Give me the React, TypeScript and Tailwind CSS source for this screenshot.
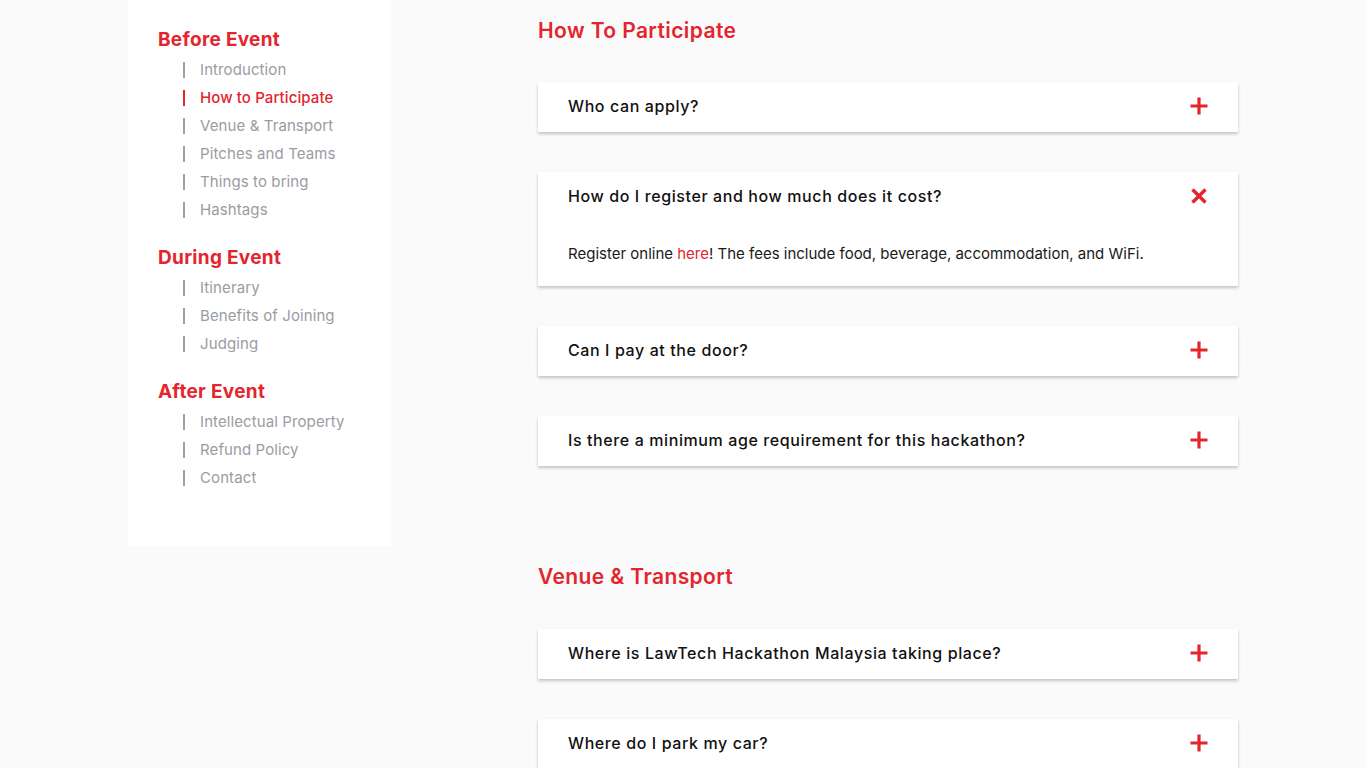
import React from "react";

const RED = "text-[#e3252d]";

function Plus() {
  return (
    <svg width="20" height="20" viewBox="0 0 20 20" className="shrink-0">
      <path d="M10 1.5v17M1.5 10h17" stroke="#e3252d" strokeWidth="3.2" />
    </svg>
  );
}

function Cross() {
  return (
    <svg width="20" height="20" viewBox="0 0 20 20" className="shrink-0">
      <path d="M3.5 3.5l13 13M16.5 3.5l-13 13" stroke="#e3252d" strokeWidth="3.4" />
    </svg>
  );
}

type NavGroup = { title: string; items: { label: string; active?: boolean }[] };

const nav: NavGroup[] = [
  {
    title: "Before Event",
    items: [
      { label: "Introduction" },
      { label: "How to Participate", active: true },
      { label: "Venue & Transport" },
      { label: "Pitches and Teams" },
      { label: "Things to bring" },
      { label: "Hashtags" },
    ],
  },
  {
    title: "During Event",
    items: [{ label: "Itinerary" }, { label: "Benefits of Joining" }, { label: "Judging" }],
  },
  {
    title: "After Event",
    items: [{ label: "Intellectual Property" }, { label: "Refund Policy" }, { label: "Contact" }],
  },
];

function Card({ q, open, children }: { q: string; open?: boolean; children?: React.ReactNode }) {
  return (
    <div className="bg-white shadow-[0_2px_3px_rgba(0,0,0,0.22)]">
      <div className="flex h-[50px] items-center justify-between pb-[2px] pl-[30px] pr-[29px]">
        <span className="text-[16px] font-medium tracking-[0.6px] text-[#111]">{q}</span>
        {open ? <Cross /> : <Plus />}
      </div>
      {open && (
        <div className="px-[30px] pb-[20px] pt-[20px] text-[15px] leading-[24px] text-[#1a1a1a]">{children}</div>
      )}
    </div>
  );
}

function SectionTitle({ children }: { children: React.ReactNode }) {
  return (
    <h2 className={`text-[21px] font-semibold leading-[28px] tracking-[0.4px] ${RED}`}>{children}</h2>
  );
}

export default function App() {
  return (
    <div className="flex min-h-[768px] bg-[#fafafa] pl-[128px]" style={{ fontFamily: "Inter, 'Noto Sans', sans-serif" }}>
      <aside className="h-[546px] w-[263px] shrink-0 bg-white pl-[30px] pt-[28px]">
        {nav.map((g, gi) => (
          <div key={g.title} className={gi > 0 ? "mt-[22px]" : ""}>
            <div className={`text-[19px] font-bold leading-[24px] tracking-[0.3px] ${RED}`}>{g.title}</div>
            <ul className="mt-[4px]">
              {g.items.map((it) => (
                <li key={it.label} className="flex h-[28px] items-center pl-[25px]">
                  <span className={`h-[16px] w-[2px] ${it.active ? "bg-[#e3252d]" : "bg-[#a0a0a4]"}`} />
                  <span
                    className={`ml-[15px] text-[15px] tracking-[0.1px] ${
                      it.active ? "font-medium text-[#e3252d]" : "text-[#9a9ca2]"
                    }`}
                  >
                    {it.label}
                  </span>
                </li>
              ))}
            </ul>
          </div>
        ))}
      </aside>

      <main className="ml-[147px] w-[700px] pt-[17px]">
        <SectionTitle>How To Participate</SectionTitle>
        <div className="mt-[37px] flex flex-col gap-[40px]">
          <Card q="Who can apply?" />
          <Card q="How do I register and how much does it cost?" open>
            Register online <span className="text-[#e3252d]">here</span>! The fees include food, beverage,
            accommodation, and WiFi.
          </Card>
          <Card q="Can I pay at the door?" />
          <Card q="Is there a minimum age requirement for this hackathon?" />
        </div>

        <div className="mt-[97px]">
          <SectionTitle>Venue &amp; Transport</SectionTitle>
        </div>
        <div className="mt-[38px] flex flex-col gap-[40px]">
          <Card q="Where is LawTech Hackathon Malaysia taking place?" />
          <Card q="Where do I park my car?" />
        </div>
      </main>
    </div>
  );
}
